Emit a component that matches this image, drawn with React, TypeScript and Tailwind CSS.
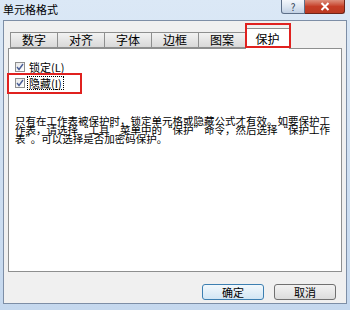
import React from "react";

const font = { fontFamily: '"Noto Sans CJK SC", "Noto Sans", sans-serif' };

const tabs = ["数字", "对齐", "字体", "边框", "图案"];

function Checkbox({ label, hot, focused }: { label: string; hot: string; focused?: boolean }) {
  return (
    <div className="flex items-center gap-[3px] h-[14px]">
      <div className="w-[10px] h-[10px] border border-[#8f8f8f] bg-gradient-to-br from-[#e8e8e8] to-white flex items-center justify-center">
        <svg width="8" height="8" viewBox="0 0 8 8">
          <path d="M1 4 L3 6.5 L7 1" fill="none" stroke="#4a5f97" strokeWidth="1.4" />
        </svg>
      </div>
      <span className={"text-[11px] leading-[12px] text-black px-[1px] " + (focused ? "outline-1 outline-dotted outline-black" : "")}>
        {label}(<span className="underline">{hot}</span>)
      </span>
    </div>
  );
}

export default function App() {
  return (
    <div className="w-[350px] h-[310px] bg-gradient-to-b from-[#dbe8f6] to-[#c5d8ee] flex flex-col relative overflow-hidden" style={font}>
      {/* title bar */}
      <div className="h-[20px] flex items-start shrink-0">
        <div className="pl-[3px] pt-[3px] text-[11px] leading-[13px] text-black">单元格格式</div>
        <div className="ml-auto flex mr-[5px] shrink-0">
          <div className="w-[24px] h-[14px] shrink-0 border border-[#5d6f88] border-t-0 rounded-bl-[3px] bg-gradient-to-b from-[#f4f7fb] via-[#dde6f1] to-[#c2d1e4] flex items-center justify-center text-[10px] leading-none text-[#2f3d52]">
            ?
          </div>
          <div className="w-[40px] h-[14px] shrink-0 border border-[#6d2419] border-t-0 border-l-0 rounded-br-[3px] bg-gradient-to-b from-[#dc8e7c] via-[#c53d26] to-[#bb3a22] flex items-center justify-center">
            <svg width="10" height="9" viewBox="0 0 10 9">
              <path d="M1.5 1 L8.5 8 M8.5 1 L1.5 8" stroke="white" strokeWidth="2" />
            </svg>
          </div>
        </div>
      </div>

      {/* window body */}
      <div className="flex-1 mx-[3px] mb-[6px] border border-[#7d8ea6] bg-[#f0f0f0] flex flex-col px-[4px]">
        {/* tab strip */}
        <div className="flex items-end h-[27px] pl-[2px] relative z-10">
          {tabs.map((t) => (
            <div
              key={t}
              className="w-[47px] h-[16px] border border-[#8e8f8f] border-r-0 bg-gradient-to-b from-[#f2f2f2] to-[#d9d9d9] flex items-center justify-center text-[12px] leading-none text-black"
            >
              {t}
            </div>
          ))}
          <div className="w-[45px] h-[21px] -mb-[1px] border border-[#8e8f8f] border-b-0 bg-white flex items-center justify-center text-[12px] leading-none text-black">
            保护
          </div>
        </div>

        {/* tab panel */}
        <div className="h-[224px] bg-white border border-[#8e8f8f] pl-[6px] pt-[11px] flex flex-col">
          <div className="flex flex-col gap-[2px]">
            <Checkbox label="锁定" hot="L" />
            <Checkbox label="隐藏" hot="I" focused />
          </div>
          <div className="mt-[26px] text-[10.5px] leading-[9px] text-black whitespace-pre">
            {"只有在工作表被保护时，锁定单元格或隐藏公式才有效。如要保护工\n作表，请选择“工具”菜单中的“保护”命令，然后选择“保护工作\n表”。可以选择是否加密码保护。"}
          </div>
        </div>

        {/* buttons */}
        <div className="flex justify-end gap-[10px] mt-[12px] pr-[6px]">
          <div className="w-[62px] h-[16px] rounded-[3px] border border-[#3c7fb1] bg-gradient-to-b from-[#f2f8fc] to-[#d2e6f4] flex items-center justify-center text-[11px] leading-none text-black">
            确定
          </div>
          <div className="w-[62px] h-[16px] rounded-[3px] border border-[#707070] bg-gradient-to-b from-[#f2f2f2] to-[#dcdcdc] flex items-center justify-center text-[11px] leading-none text-black">
            取消
          </div>
        </div>
      </div>

      {/* red highlight boxes */}
      <div className="absolute left-[245px] top-[23px] w-[46px] h-[25px] border-2 border-[#e0211f] z-20" />
      <div className="absolute left-[7px] top-[73px] w-[75px] h-[21px] border-2 border-[#e0211f] z-20" />
    </div>
  );
}
